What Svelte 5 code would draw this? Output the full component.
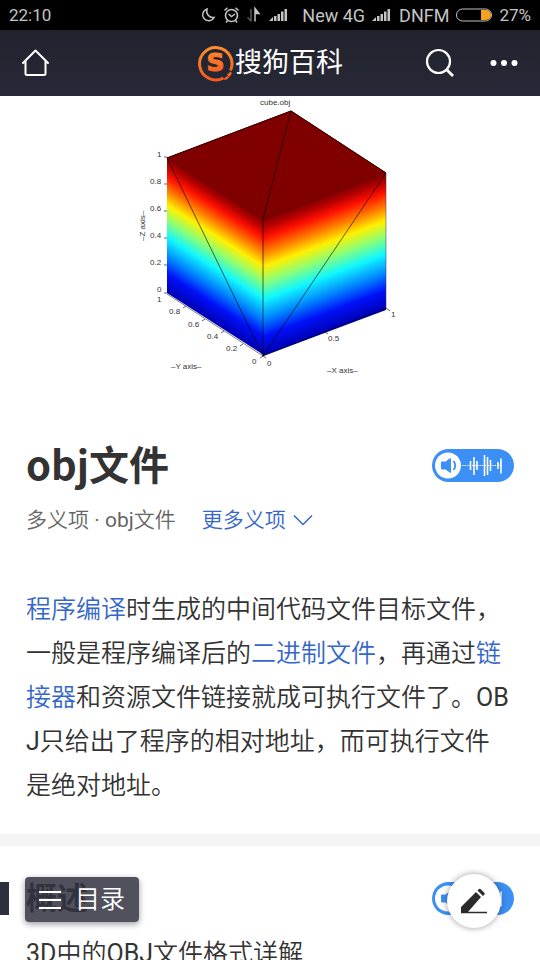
<script>
  const title = 'obj文件';

  // tick labels around the plotted cube
  const ticks = [
    { x: 157, y: 157, text: '1' },
    { x: 150, y: 184, text: '0.8' },
    { x: 150, y: 211, text: '0.6' },
    { x: 150, y: 238, text: '0.4' },
    { x: 150, y: 265, text: '0.2' },
    { x: 157, y: 292, text: '0' },
    { x: 157, y: 302, text: '1' },
    { x: 169, y: 314, text: '0.8' },
    { x: 188, y: 327, text: '0.6' },
    { x: 207, y: 339, text: '0.4' },
    { x: 226, y: 351, text: '0.2' },
    { x: 252, y: 364, text: '0' },
    { x: 267, y: 366, text: '0' },
    { x: 328, y: 341, text: '0.5' },
    { x: 391, y: 317, text: '1' }
  ];
</script>

{#snippet signal()}
  <svg class="signal" width="20" height="14" viewBox="0 0 20 14" aria-hidden="true">
    <path d="M0 13l4-4v4zM5 8h2.500v5H5zM8.500 6H11v7H8.500zM12 3.500h2.500V13H12zM15.500 1H18v12h-2.500z" fill="#c4c4c4" />
  </svg>
{/snippet}

{#snippet audioButton(label)}
  <button class="audio" aria-label={label}>
    <svg width="82" height="33" viewBox="0 0 82 33" aria-hidden="true">
      <circle cx="16" cy="16.500" r="13" fill="#fff" />
      <path d="M9.500 13h4l5-3.500v14l-5-3.500h-4z" fill="#3c8ff5" stroke="#3c8ff5" stroke-linejoin="round" />
      <path d="M21.500 12q3.500 4.500 0 9" fill="none" stroke="#3c8ff5" stroke-width="1.800" />
      <path d="M30 16.500h39" stroke="#fff" stroke-width="1" stroke-dasharray="1.500 1" />
      <path
        d="M38.500 12v9M42 8v18M45 12v9M52.500 6v21M55.500 8v18M58.500 11v11M66 13v7M69 9.500v15"
        stroke="#fff"
        stroke-width="1.600"
      />
    </svg>
  </button>
{/snippet}

<div class="page">
  <div class="status">
    <span>22:10</span>
    <div class="status-right">
      <svg width="62" height="18" viewBox="0 0 62 18" fill="none" stroke="#c4c4c4" aria-hidden="true">
        <path d="M7 3A6 6 0 1 0 14 11.500A6.500 6.500 0 0 1 7 3z" stroke-width="1.500" />
        <circle cx="31.500" cy="9.500" r="6" stroke-width="1.600" />
        <path d="M28.500 8l3 2.500 3.500-2.500M24.500 4.500l3-2.800M38.500 4.500l-3-2.800M27.500 14.500l-1.500 2M35.500 14.500l1.500 2" stroke-width="1.500" />
        <path d="M51 3v12.500M51 15l-3.500-3.500" stroke="#555" stroke-width="1.600" />
        <path d="M55 15.500V2.500l4 5h-4" fill="#c4c4c4" stroke-width="1.500" />
      </svg>
      {@render signal()}
      <span class="carrier first">New 4G</span>
      {@render signal()}
      <span class="carrier">DNFM</span>
      <svg width="36" height="14" viewBox="0 0 36 14" aria-hidden="true">
        <path d="M25 2h5a5 5 0 0 1 0 10h-5z" fill="#f9a11b" />
        <rect x="0.500" y="1" width="35" height="12" rx="6" fill="none" stroke="#c4c4c4" />
      </svg>
      <span>27%</span>
    </div>
  </div>

  <header>
    <a class="home" href="#home" aria-label="首页">
      <svg width="28" height="28" viewBox="0 0 28 28" fill="none" stroke="#fff" stroke-width="2" stroke-linejoin="round" stroke-linecap="round">
        <path d="M1 14L13.500 1.500 26 14M3.500 12v12.500q0 1.500 1.500 1.500h17q1.500 0 1.500-1.500V12" />
      </svg>
    </a>
    <a class="logo" href="#baike">
      <svg width="38" height="38" viewBox="0 0 38 38" aria-hidden="true">
        <defs>
          <linearGradient id="flame" x1="0" y1="0" x2="0" y2="1">
            <stop offset="0" stop-color="#ff8b30" />
            <stop offset="1" stop-color="#f65a1c" />
          </linearGradient>
        </defs>
        <path d="M26.500 34A16.200 16.200 0 1 1 33.500 26.500" fill="none" stroke="url(#flame)" stroke-width="3" />
        <path d="M33 27.500l2 1.500q-1 3-3.500 4l-1.500-2.500q2-1 3-3z" fill="#f6641e" />
        <path d="M27.500 34l3-2 1.500 1.500q-2 2.500-5 2.500z" fill="#f6641e" />
        <text x="18.500" y="27" text-anchor="middle" class="mark">S</text>
      </svg>
      <span>搜狗百科</span>
    </a>
    <div class="tools">
      <button aria-label="搜索">
        <svg width="30" height="30" viewBox="0 0 30 30" fill="none" stroke="#fff" stroke-width="2.200">
          <circle cx="13.500" cy="13.500" r="11.500" />
          <path d="M21.500 21.500l6.500 6.500" stroke-width="2.800" />
        </svg>
      </button>
      <button aria-label="更多">
        <svg width="28" height="8" viewBox="0 0 28 8" fill="#fff">
          <circle cx="3.500" cy="4" r="3" />
          <circle cx="14" cy="4" r="3" />
          <circle cx="24.500" cy="4" r="3" />
        </svg>
      </button>
    </div>
  </header>

  <main>
    <figure>
      <svg width="300" height="290" viewBox="120 96 300 290" role="img" aria-label="cube.obj">
        <defs>
          <linearGradient id="jet" x1="0" y1="0" x2="0" y2="1">
            <stop offset="0" stop-color="#800000" />
            <stop offset="0.060" stop-color="#b00000" />
            <stop offset="0.140" stop-color="#ff1000" />
            <stop offset="0.250" stop-color="#ff8000" />
            <stop offset="0.350" stop-color="#fff000" />
            <stop offset="0.460" stop-color="#90ff70" />
            <stop offset="0.590" stop-color="#10f8ff" />
            <stop offset="0.740" stop-color="#0080ff" />
            <stop offset="0.860" stop-color="#0010f8" />
            <stop offset="1" stop-color="#0000b0" />
          </linearGradient>
        </defs>
        <rect width="96" height="136" fill="url(#jet)" transform="matrix(1 .64 0 1 167 157)" />
        <rect width="123" height="137" fill="url(#jet)" transform="matrix(1 -.375 0 1 263 219)" />
        <path d="M167 158L291 111l95 62-123 47z" fill="#800000" stroke="#700000" />
        <g fill="none" stroke="#000" stroke-width="1">
          <path d="M167 158L291 111l95 62" stroke="#350000" />
          <path d="M263 219v137M167 158l96 198L386 173M291 111l-28 108" opacity="0.600" />
          <path d="M386 173v135" stroke="#336" opacity="0.500" />
          <path d="M167 294l96 62 123-48" opacity="0.500" />
          <path d="M164 157h3M164 184h3M164 211h3M164 238h3M164 265h3M164 293h3M186 306l-3 2M205 319l-3 2M224 331l-3 2M243 344l-3 2M263 356l-3 2M263 356l3 2M325 332l3 2M386 308l4 3" opacity="0.600" />
        </g>
        <g class="ticks">
          {#each ticks as tick}
            <text x={tick.x} y={tick.y}>{tick.text}</text>
          {/each}
          <text x="260" y="105">cube.obj</text>
          <text x="171" y="369">–Y axis–</text>
          <text x="327" y="373">–X axis–</text>
          <text transform="translate(145 241) rotate(-90)">–Z axis–</text>
        </g>
      </svg>
    </figure>

    <section class="intro">
      <div class="title-row">
        <h1>{title}</h1>
        {@render audioButton('播放摘要')}
      </div>
      <div class="senses">
        <span>多义项 · {title}</span>
        <button class="more">
          更多义项
          <svg width="20" height="12" viewBox="0 0 20 12" fill="none" stroke="#3567c8" stroke-width="1.500" aria-hidden="true">
            <path d="M1 1.500l9 9 9-9" />
          </svg>
        </button>
      </div>
      <p>
        <a href="#compile">程序编译</a>时生成的中间代码文件目标文件，一般是程序编译后的<a href="#binary">二进制文件</a>，再通过<a href="#linker">链接器</a>和资源文件链接就成可执行文件了。OBJ只给出了程序的相对地址，而可执行文件是绝对地址。
      </p>
    </section>

    <section class="overview">
      <div class="heading">
        <h2>概述</h2>
        {@render audioButton('播放概述')}
      </div>
      <p>3D中的OBJ文件格式详解</p>
    </section>
  </main>

  <button class="toc">
    <svg width="22" height="20" viewBox="0 0 22 20" stroke="#fff" stroke-width="2" aria-hidden="true">
      <path d="M0 2h22M0 10h22M0 18h22" />
    </svg>
    目录
  </button>
  <button class="edit" aria-label="编辑">
    <svg width="28" height="26" viewBox="0 0 28 26" aria-hidden="true">
      <path d="M1 24.500V19L16 4l5 5L7.500 24.500zM17.500 2.500L19 1q.8-.5 1.500 0L24.500 5q.5.800 0 1.500L23 8z" fill="#2b2b2b" />
      <path d="M1 24.500h26" stroke="#2b2b2b" stroke-width="1.500" />
    </svg>
  </button>
</div>

<style>
  :global(body) {
    margin: 0;
    background: #fff;
  }

  .page {
    position: relative;
    height: 100vh;
    overflow: hidden;
    font-family: Roboto, 'Noto Sans CJK SC', sans-serif;
    color: #333;
  }

  button {
    display: flex;
    align-items: center;
    padding: 0;
    border: none;
    background: none;
    font: inherit;
    cursor: pointer;
  }

  a {
    color: #3567c8;
    text-decoration: none;
  }

  svg {
    display: block;
    flex: none;
  }

  .status {
    display: flex;
    align-items: center;
    justify-content: space-between;
    height: 30px;
    padding: 0 9px;
    background: #000;
    color: #c4c4c4;
    font-size: 17px;
  }

  .status-right {
    display: flex;
    align-items: center;
    gap: 7px;
  }

  .carrier {
    font-size: 18px;
  }

  .first {
    margin-left: 6px;
  }

  header {
    display: grid;
    grid-template-columns: 1fr auto 1fr;
    align-items: center;
    height: 66px;
    padding: 0 22px;
    background: linear-gradient(#20222c, #282938);
  }

  .logo {
    display: flex;
    align-items: center;
    color: #fff;
    font-size: 27px;
    line-height: 38px;
  }

  .mark {
    font: 700 25px 'DejaVu Sans', sans-serif;
    fill: url(#flame);
    stroke: url(#flame);
    stroke-width: 1px;
  }

  .tools {
    display: flex;
    align-items: center;
    justify-content: flex-end;
    gap: 35px;
  }

  figure {
    display: flex;
    justify-content: center;
    margin: 0;
  }

  .ticks {
    font: 8px 'Liberation Sans', sans-serif;
    fill: #333;
  }

  .intro {
    padding: 49px 26px 26px;
    border-bottom: 12px solid #f4f4f4;
  }

  .title-row,
  .heading {
    display: flex;
    align-items: center;
    justify-content: space-between;
  }

  h1 {
    margin: 0;
    padding-bottom: 4px;
    font: 700 40px/56px 'Noto Sans CJK SC', sans-serif;
  }

  .audio {
    border-radius: 17px;
    background: #3c8ff5;
  }

  .senses {
    display: flex;
    gap: 26px;
    margin: 6px 0 49px;
    color: #666;
    font-family: Roboto, 'Noto Sans CJK SC DemiLight', 'Noto Sans CJK SC', sans-serif;
    font-size: 21px;
    line-height: 38px;
  }

  .more {
    gap: 7px;
    color: #3567c8;
  }

  p {
    margin: 0;
    font-family: Roboto, 'Noto Sans CJK SC DemiLight', 'Noto Sans CJK SC', sans-serif;
    font-size: 25px;
    line-height: 44px;
    word-break: break-all;
  }

  .overview {
    padding: 36px 26px;
  }

  .heading {
    margin: 0 0 17px -26px;
    padding-left: 17px;
    border-left: 9px solid #2b303c;
  }

  h2 {
    margin: 0;
    font-size: 31px;
    line-height: 33px;
  }

  .toc {
    position: absolute;
    bottom: 38px;
    left: 25px;
    gap: 14px;
    height: 45px;
    padding: 0 14px;
    border-radius: 4px;
    background: rgba(50, 51, 66, 0.85);
    box-shadow: 0 2px 6px rgba(0, 0, 0, 0.4);
    color: #fff;
    font-size: 25px;
    font-weight: 350;
    line-height: 41px;
  }

  .edit {
    position: absolute;
    right: 39px;
    bottom: 32px;
    justify-content: center;
    width: 54px;
    height: 54px;
    border-radius: 50%;
    background: #fff;
    box-shadow: 0 0 6px rgba(0, 0, 0, 0.4);
  }
</style>
